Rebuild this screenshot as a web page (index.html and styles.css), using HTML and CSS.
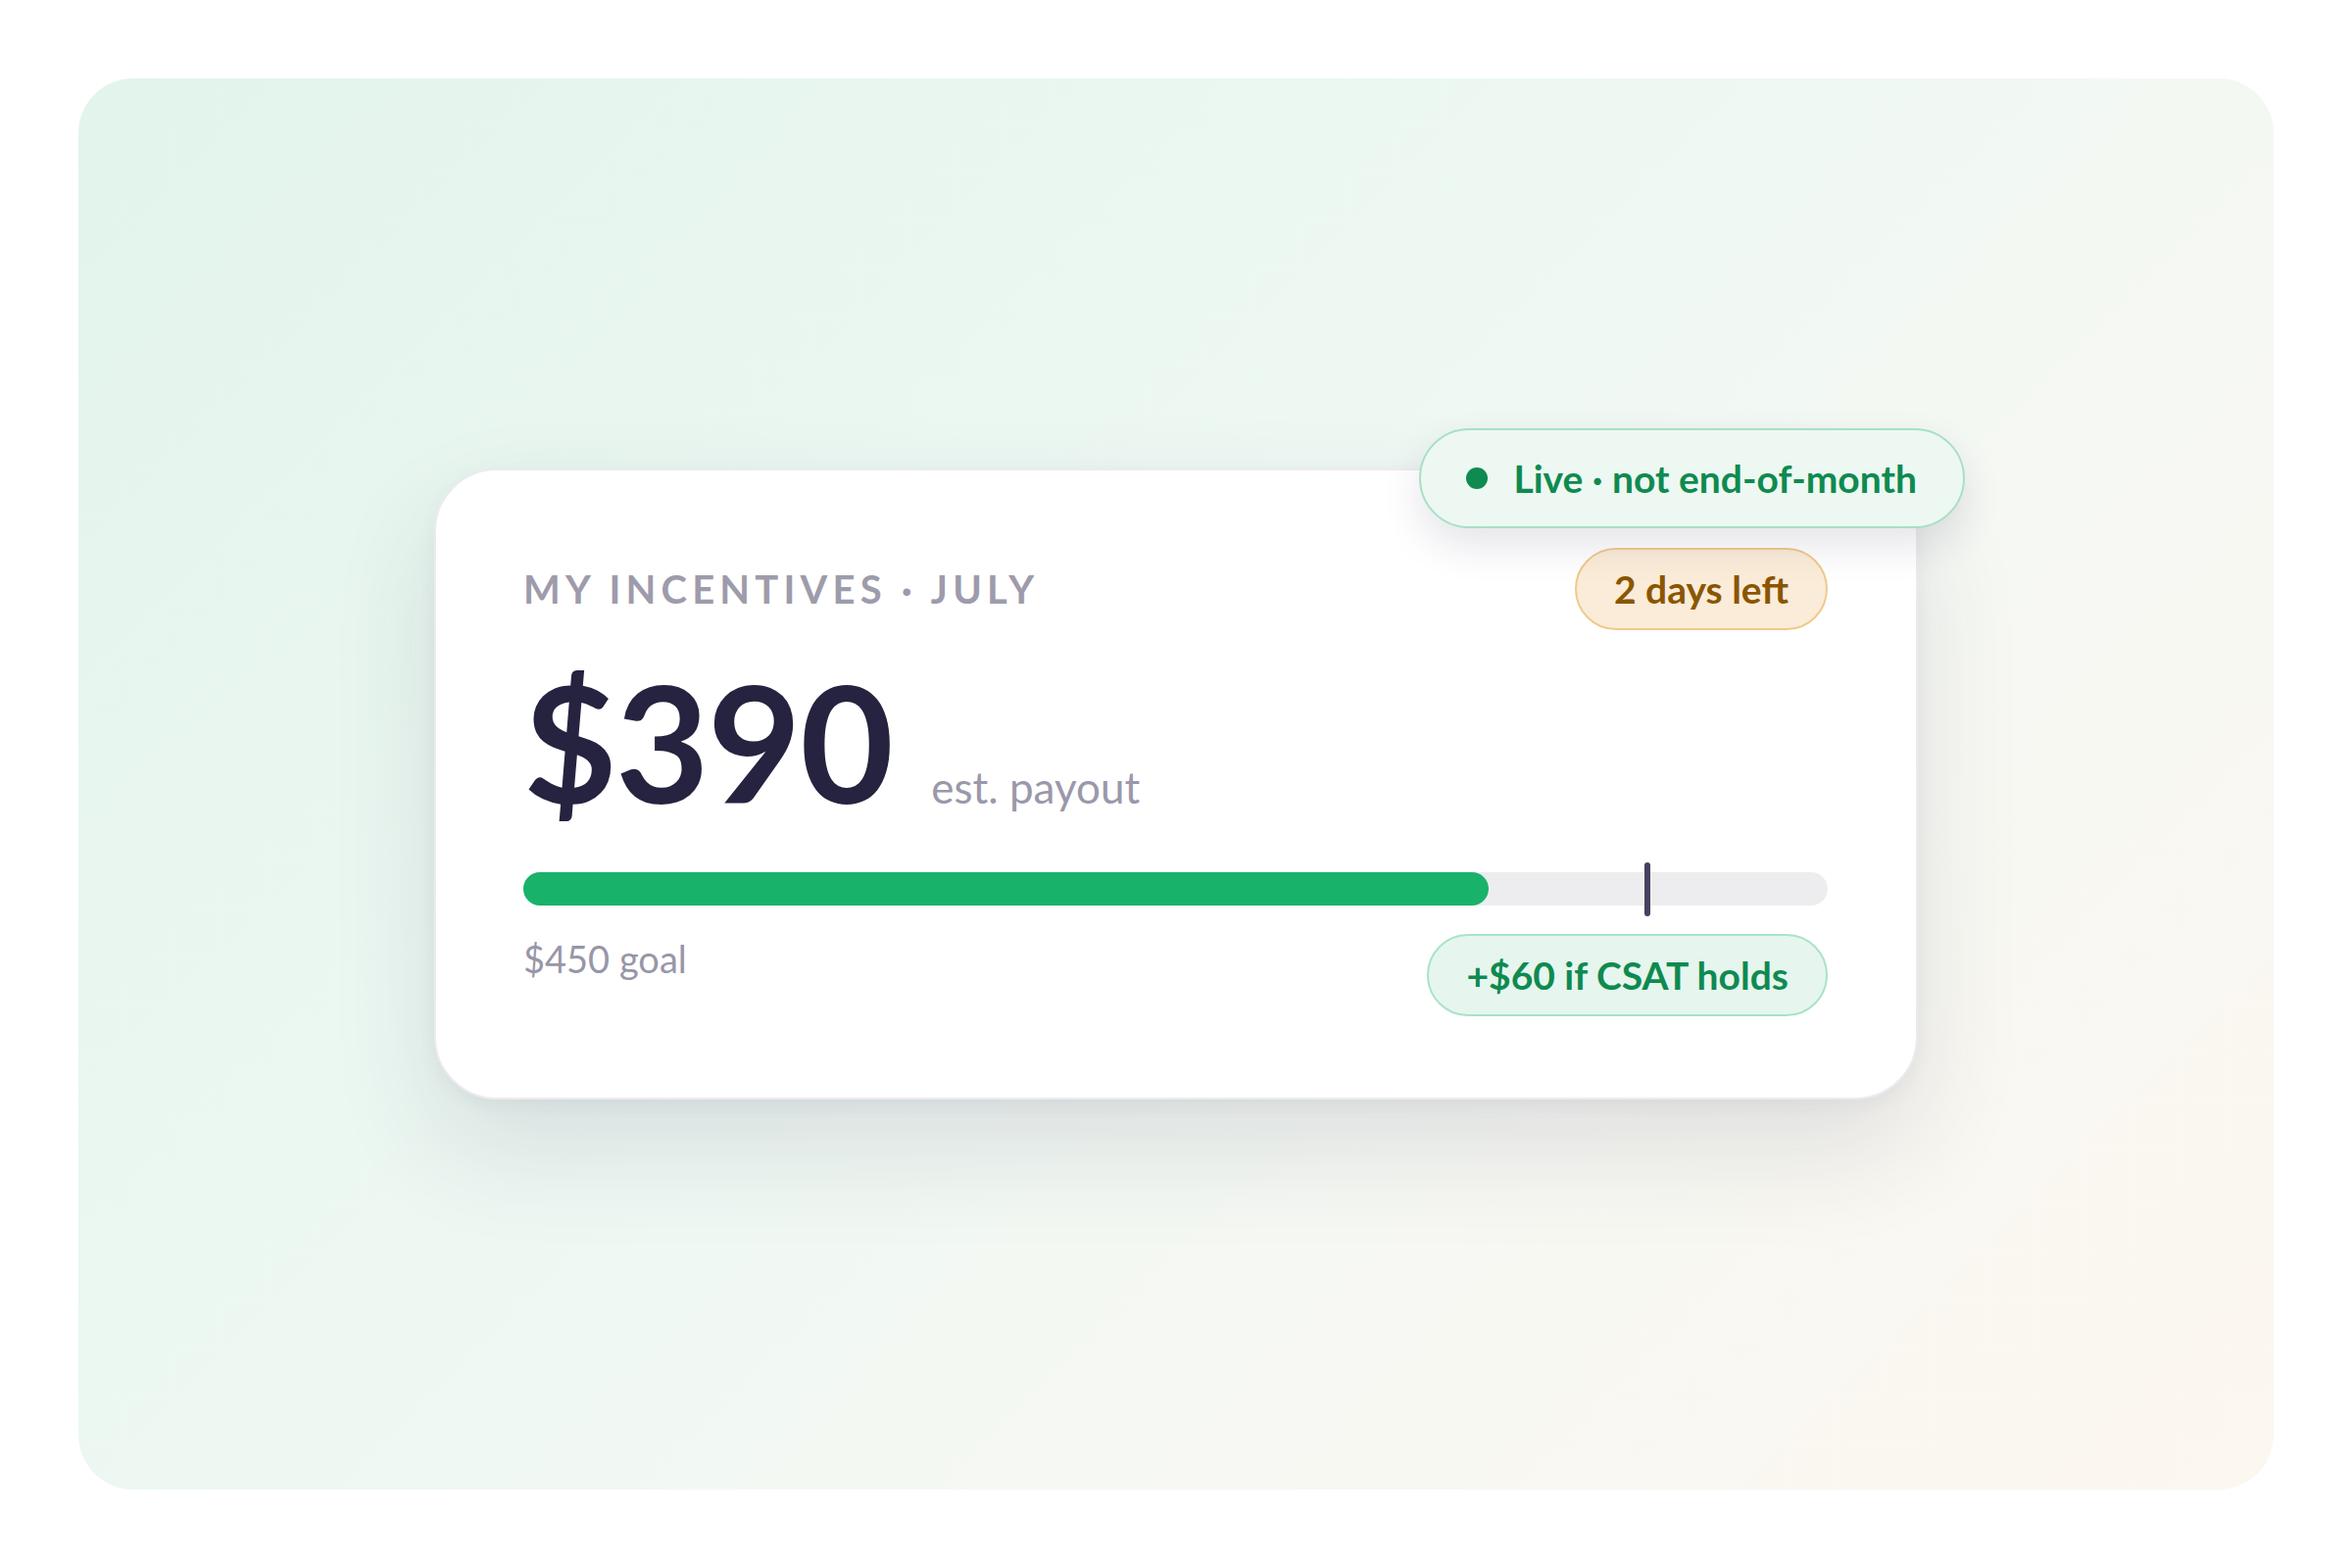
FILE: index.html
```html
<!DOCTYPE html>
<html lang="en">
<head>
    <meta charset="UTF-8">
    <meta name="viewport" content="width=device-width, initial-scale=1.0">
    <title>My Incentives</title>
    <link rel="stylesheet" href="styles.css">
</head>
<body>
    <div class="stage">
        <div class="card">
            <div class="live-pill">
                <span class="live-dot"></span>
                <span>Live · not end-of-month</span>
            </div>

            <div class="card-head">
                <div class="label">MY INCENTIVES · JULY</div>
                <div class="pill pill-warn">2 days left</div>
            </div>

            <div class="amount-row">
                <div class="amount">$390</div>
                <div class="amount-note">est. payout</div>
            </div>

            <div class="progress">
                <div class="progress-fill" style="width: 74%"></div>
                <div class="progress-mark" style="left: 86.2%"></div>
            </div>

            <div class="card-foot">
                <div class="goal">$450 goal</div>
                <div class="pill pill-good">+$60 if CSAT holds</div>
            </div>
        </div>
    </div>
</body>
</html>
```

FILE: styles.css
```css
* {
    box-sizing: border-box;
}

body {
    margin: 0;
    padding: 80px;
    background-color: #ffffff;
    font-family: Lato, "Open Sans", sans-serif;
}

.stage {
    height: 1440px;
    border-radius: 56px;
    background: linear-gradient(135deg, #e2f4eb 0%, #eef8f3 45%, #f7f8f3 70%, #fcf7ef 100%);
    display: flex;
    justify-content: center;
    align-items: center;
}

.card {
    position: relative;
    width: 1514px;
    padding: 79px 90px 83px 89px;
    background-color: #ffffff;
    border: 2px solid #ebebf0;
    border-radius: 64px;
    box-shadow: 0 50px 110px rgba(50, 50, 80, 0.12), 0 6px 18px rgba(50, 50, 80, 0.05);
}

/* floating status chip over the top right corner */
.live-pill {
    position: absolute;
    top: -43px;
    right: -50px;
    display: flex;
    align-items: center;
    gap: 26px;
    padding: 25px 47px 25px 46px;
    line-height: 48px;
    font-size: 39px;
    font-weight: 700;
    color: #0f8a50;
    background-color: #edf8f2;
    border: 2px solid #a8e0c4;
    border-radius: 60px;
    box-shadow: 0 18px 40px rgba(40, 40, 80, 0.12);
}

.live-dot {
    width: 22px;
    height: 22px;
    border-radius: 50%;
    background-color: #0f8a50;
}

.card-head {
    display: flex;
    justify-content: space-between;
    align-items: center;
}

.label {
    font-size: 40px;
    font-weight: 700;
    letter-spacing: 0.13em;
    color: #9e9bab;
}

.pill {
    padding: 16px 38px;
    line-height: 48px;
    font-size: 39px;
    font-weight: 700;
    border: 2px solid;
    border-radius: 50px;
    white-space: nowrap;
}

.pill-warn {
    color: #8a5600;
    background-color: #fbecd9;
    border-color: #f0c98c;
}

.pill-good {
    color: #0f8a50;
    background-color: #e6f6ee;
    border-color: #a9e3c8;
}

.amount-row {
    display: flex;
    align-items: baseline;
    gap: 40px;
    margin-top: 31px;
}

.amount {
    font-size: 165px;
    line-height: 1;
    font-weight: 700;
    letter-spacing: -0.01em;
    color: #262340;
}

.amount-note {
    font-size: 44px;
    color: #9b98aa;
}

.progress {
    position: relative;
    height: 34px;
    margin-top: 51px;
    border-radius: 17px;
    background-color: #ededf0;
}

.progress-fill {
    height: 100%;
    border-radius: 17px;
    background-color: #19b26b;
}

.progress-mark {
    position: absolute;
    top: -10px;
    bottom: -11px;
    width: 6px;
    border-radius: 3px;
    background-color: #46415f;
    transform: translateX(-50%);
}

.card-foot {
    display: flex;
    justify-content: space-between;
    align-items: flex-start;
    margin-top: 29px;
}

.goal {
    margin-top: 1px;
    font-size: 38px;
    line-height: 1.3;
    color: #9896a8;
}
```
